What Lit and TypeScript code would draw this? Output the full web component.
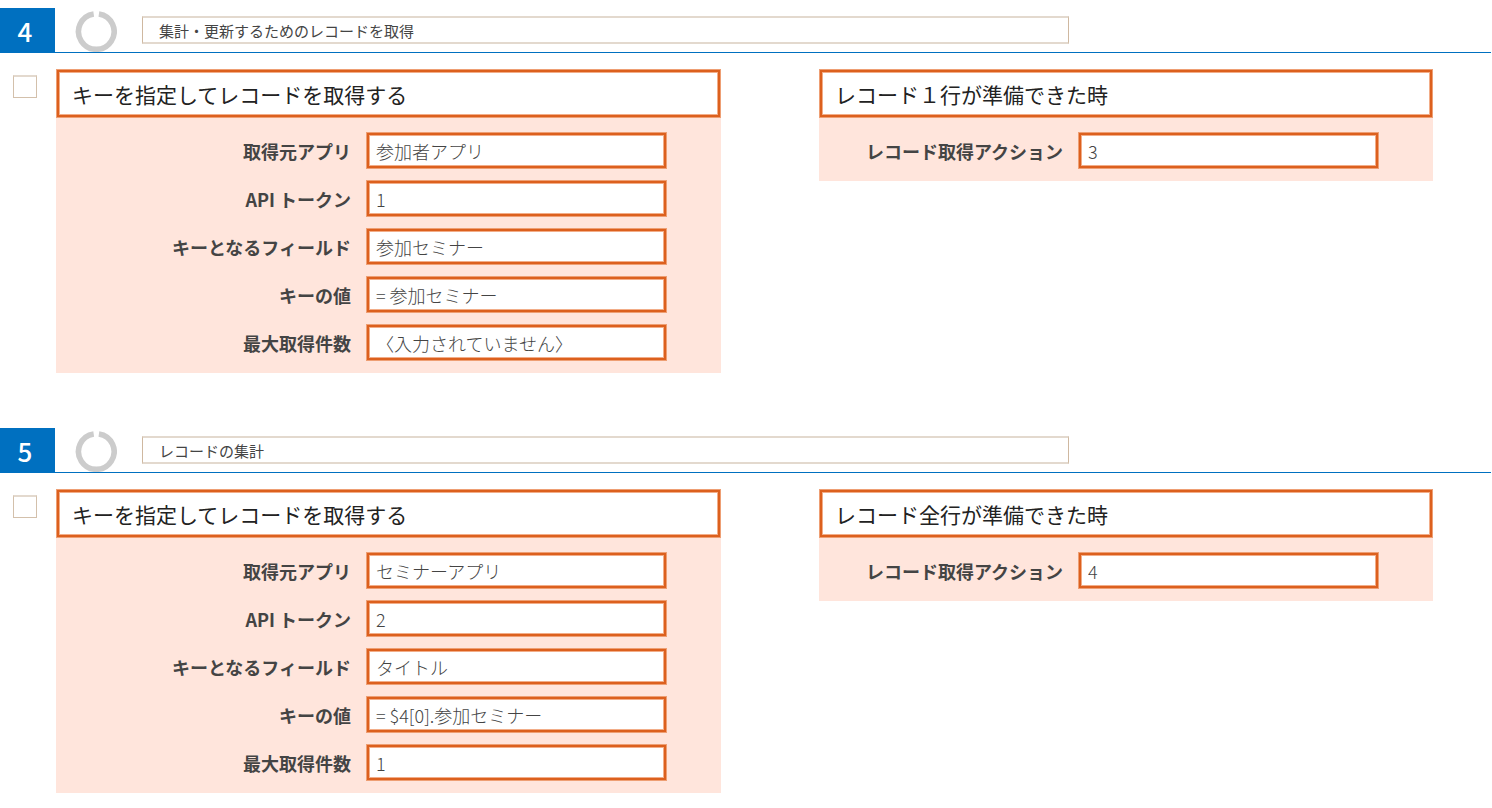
import { LitElement, html, css } from "lit";
import { customElement, property } from "lit/decorators.js";

interface Field {
  label: string;
  value: string;
}

interface Card {
  title: string;
  fields: Field[];
}

interface Step {
  number: number;
  description: string;
  cards: Card[];
}

const steps: Step[] = [
  {
    number: 4,
    description: "集計・更新するためのレコードを取得",
    cards: [
      {
        title: "キーを指定してレコードを取得する",
        fields: [
          { label: "取得元アプリ", value: "参加者アプリ" },
          { label: "API トークン", value: "1" },
          { label: "キーとなるフィールド", value: "参加セミナー" },
          { label: "キーの値", value: "= 参加セミナー" },
          { label: "最大取得件数", value: "〈入力されていません〉" },
        ],
      },
      {
        title: "レコード１行が準備できた時",
        fields: [{ label: "レコード取得アクション", value: "3" }],
      },
    ],
  },
  {
    number: 5,
    description: "レコードの集計",
    cards: [
      {
        title: "キーを指定してレコードを取得する",
        fields: [
          { label: "取得元アプリ", value: "セミナーアプリ" },
          { label: "API トークン", value: "2" },
          { label: "キーとなるフィールド", value: "タイトル" },
          { label: "キーの値", value: "= $4[0].参加セミナー" },
          { label: "最大取得件数", value: "1" },
        ],
      },
      {
        title: "レコード全行が準備できた時",
        fields: [{ label: "レコード取得アクション", value: "4" }],
      },
    ],
  },
];

@customElement("action-card")
export class ActionCard extends LitElement {
  @property({ attribute: false }) card!: Card;

  static styles = css`
    :host {
      display: block;
      min-width: 0;
      background: #ffe5dc;
    }
    .title,
    .value {
      box-sizing: border-box;
      margin: 0;
      border: 1px solid #ee9f74;
      background: #fff;
      box-shadow: inset 0 0 0 2px #dc601e, inset 0 0 0 3px #f2ad88;
    }
    .title {
      padding: 8px 15px 7px;
      font-size: 21px;
      font-weight: 400;
      line-height: 32px;
      color: #222;
    }
    .fields {
      display: grid;
      grid-template-columns: 1fr minmax(0, 301px);
      gap: 11px 15px;
      align-items: center;
      padding: 14px 54px 12px 14px;
    }
    .label {
      text-align: right;
      font-size: 18px;
      font-weight: 700;
      line-height: 26px;
      color: #444;
    }
    .value {
      width: 100%;
      height: 37px;
      padding: 0 9px;
      border-radius: 0;
      outline: none;
      font-family: inherit;
      font-size: 18px;
      font-weight: 300;
      color: #444;
    }
  `;

  render() {
    return html`
      <h2 class="title">${this.card.title}</h2>
      <div class="fields">
        ${this.card.fields.map(
          (field, i) => html`
            <label class="label" for="field-${i}">${field.label}</label>
            <input class="value" id="field-${i}" type="text" .value=${field.value} />
          `
        )}
      </div>
    `;
  }
}

@customElement("app-root")
export class AppRoot extends LitElement {
  static styles = css`
    :host {
      display: block;
      padding-top: 8px;
      background: #fff;
      font-family: "Noto Sans CJK JP", sans-serif;
    }
    .steps {
      display: flex;
      flex-direction: column;
      gap: 55px;
    }
    .header {
      display: flex;
      align-items: center;
      height: 44px;
      margin-right: 1px;
      border-bottom: 1px solid #0070c0;
    }
    .number {
      display: flex;
      align-items: center;
      justify-content: center;
      box-sizing: border-box;
      width: 55px;
      height: 45px;
      padding-right: 5px;
      margin-bottom: -1px;
      background: #0070c0;
      color: #fff;
      font-size: 26px;
      font-weight: 500;
      line-height: 36px;
    }
    .ring {
      width: 42px;
      height: 42px;
      margin: 2px 25px 0 20px;
      fill: none;
      stroke: #ccc;
      stroke-width: 5.6;
    }
    .description {
      box-sizing: border-box;
      flex: 0 1 927px;
      min-width: 0;
      height: 28px;
      padding: 0 16px;
      margin-right: 14px;
      border: solid;
      border-width: 2px 1px;
      border-color: #e3d9ce #cfb8a0;
      border-radius: 0;
      outline: none;
      background: #fff;
      font-family: inherit;
      font-size: 15px;
      color: #444;
    }
    .body {
      display: flex;
      align-items: flex-start;
      gap: 19px;
      padding: 16px 59px 0 13px;
    }
    .check {
      appearance: none;
      flex: none;
      box-sizing: border-box;
      width: 24px;
      height: 23px;
      margin: 6px 0 0;
      border: 1px solid #d3c0ab;
      border-top: 2px solid #e3d9ce;
      background: #fff;
    }
    .check:checked {
      background: #d3c0ab;
    }
    .cards {
      flex: 1;
      min-width: 0;
      display: grid;
      grid-template-columns: minmax(0, 665fr) minmax(0, 614fr);
      column-gap: 98px;
      align-items: start;
    }
  `;

  render() {
    return html`
      <main class="steps">
        ${steps.map(
          (step) => html`
            <section>
              <header class="header">
                <span class="number">${step.number}</span>
                <svg class="ring" viewBox="0 0 42 42" aria-hidden="true">
                  <path d="M23.9 3.9 A17.8 17.8 0 1 1 18.7 3.9" />
                </svg>
                <input
                  class="description"
                  type="text"
                  aria-label="説明"
                  .value=${step.description}
                />
              </header>
              <div class="body">
                <input class="check" type="checkbox" aria-label="選択" />
                <div class="cards">
                  ${step.cards.map((card) => html`<action-card .card=${card}></action-card>`)}
                </div>
              </div>
            </section>
          `
        )}
      </main>
    `;
  }
}
